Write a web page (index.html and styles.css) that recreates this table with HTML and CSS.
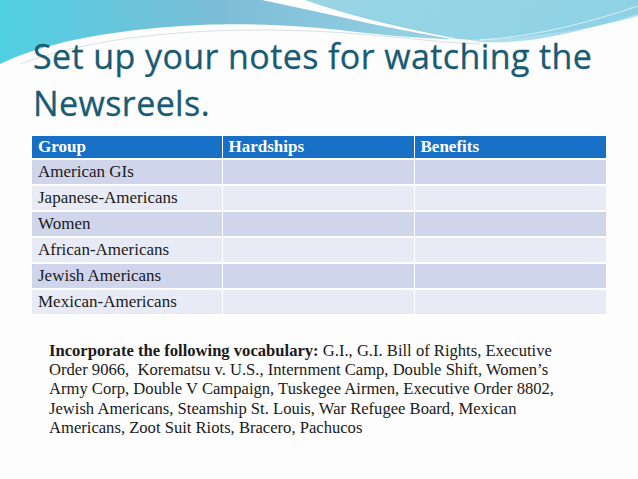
FILE: index.html
```html
<!DOCTYPE html>
<html>
<head>
<meta charset="utf-8">
<link rel="stylesheet" href="styles.css">
</head>
<body>
<div class="slide">
  <svg class="wave" width="638" height="80" viewBox="0 0 638 80">
    <defs>
      <linearGradient id="g1" x1="0" y1="60" x2="638" y2="0" gradientUnits="userSpaceOnUse">
        <stop offset="0" stop-color="#4fd0e2"/>
        <stop offset="0.35" stop-color="#7cbcd6"/>
        <stop offset="0.6" stop-color="#8fcde0"/>
        <stop offset="1" stop-color="#b3e2ec"/>
      </linearGradient>
      <linearGradient id="g2" x1="320" y1="0" x2="638" y2="40" gradientUnits="userSpaceOnUse">
        <stop offset="0" stop-color="#9edbe8"/>
        <stop offset="1" stop-color="#7fcbe3"/>
      </linearGradient>
    </defs>
    <path d="M0,0 H638 V16 C610,24 580,30 530,36 C480,42 420,40 340,30 C300,26 260,23 200,25 C100,30 40,45 0,64 Z" fill="url(#g1)"/>
    <path d="M300,0 C360,18 420,30 480,42 C520,44 560,38 638,14 V0 Z" fill="url(#g2)" opacity="0.7"/>
    <path d="M262,0 C330,14 400,32 478,43 C410,30 350,16 305,0 Z" fill="#ffffff"/>
    <path d="M20,64 C80,42 160,30 260,30 C360,30 420,42 480,44" fill="none" stroke="#9fb9c4" stroke-width="0.7" opacity="0.6"/>
    <path d="M480,40 C540,36 590,22 638,6" fill="none" stroke="#ffffff" stroke-width="0.8" opacity="0.8"/>
  </svg>

  <h1 class="title">Set up your notes for watching the<br>Newsreels.</h1>

  <table class="notes">
    <colgroup>
      <col class="c1"><col class="c2"><col class="c3">
    </colgroup>
    <thead>
      <tr><th>Group</th><th>Hardships</th><th>Benefits</th></tr>
    </thead>
    <tbody>
      <tr><td>American GIs</td><td></td><td></td></tr>
      <tr><td>Japanese-Americans</td><td></td><td></td></tr>
      <tr><td>Women</td><td></td><td></td></tr>
      <tr><td>African-Americans</td><td></td><td></td></tr>
      <tr><td>Jewish Americans</td><td></td><td></td></tr>
      <tr><td>Mexican-Americans</td><td></td><td></td></tr>
    </tbody>
  </table>

  <p class="vocab"><b>Incorporate the following vocabulary:</b> G.I., G.I. Bill of Rights, Executive<br>Order 9066, &nbsp;Korematsu v. U.S., Internment Camp, Double Shift, Women’s<br>Army Corp, Double V Campaign, Tuskegee Airmen, Executive Order 8802,<br>Jewish Americans, Steamship St. Louis, War Refugee Board, Mexican<br>Americans, Zoot Suit Riots, Bracero, Pachucos</p>
</div>
</body>
</html>
```

FILE: styles.css
```css
html, body {
  margin: 0;
  padding: 0;
  background: #fdfdfd;
}

.slide {
  position: relative;
  width: 638px;
  height: 479px;
  overflow: hidden;
  background: #fdfdfd;
}

.wave {
  position: absolute;
  left: 0;
  top: 0;
  display: block;
}

.title {
  position: relative;
  margin: 0;
  padding: 33px 0 0 33px;
  font-family: "Open Sans", "Noto Sans", sans-serif;
  font-weight: 400;
  font-size: 34px;
  line-height: 47px;
  color: #195b73;
  letter-spacing: 0.4px;
  -webkit-text-stroke: 0.3px #195b73;
}

.notes {
  margin: 9px 0 0 32px;
  border-collapse: collapse;
  table-layout: fixed;
  width: 574px;
  font-family: "Liberation Serif", "DejaVu Serif", serif;
  font-size: 17px;
  color: #1a1a1a;
}

.c1 { width: 190px; }
.c2 { width: 192px; }
.c3 { width: 192px; }

.notes th,
.notes td {
  text-align: left;
  padding: 0 0 0 6px;
  border: 1px solid #ffffff;
  border-top: 0;
  border-bottom: 2px solid #ffffff;
  white-space: nowrap;
}

.notes th:first-child,
.notes td:first-child { border-left: 0; }
.notes th:last-child,
.notes td:last-child { border-right: 0; }

.notes th {
  height: 22px;
  background: #1870c6;
  color: #ffffff;
  font-weight: bold;
}

.notes td {
  height: 24px;
}

.notes tbody tr:nth-child(odd) td { background: #cfd5ea; }
.notes tbody tr:nth-child(even) td { background: #e8ebf5; }

.vocab {
  margin: 25px 0 0 49px;
  font-family: "Liberation Serif", "DejaVu Serif", serif;
  font-size: 16.6px;
  line-height: 19.2px;
  color: #1a1a1a;
  white-space: nowrap;
}
```
